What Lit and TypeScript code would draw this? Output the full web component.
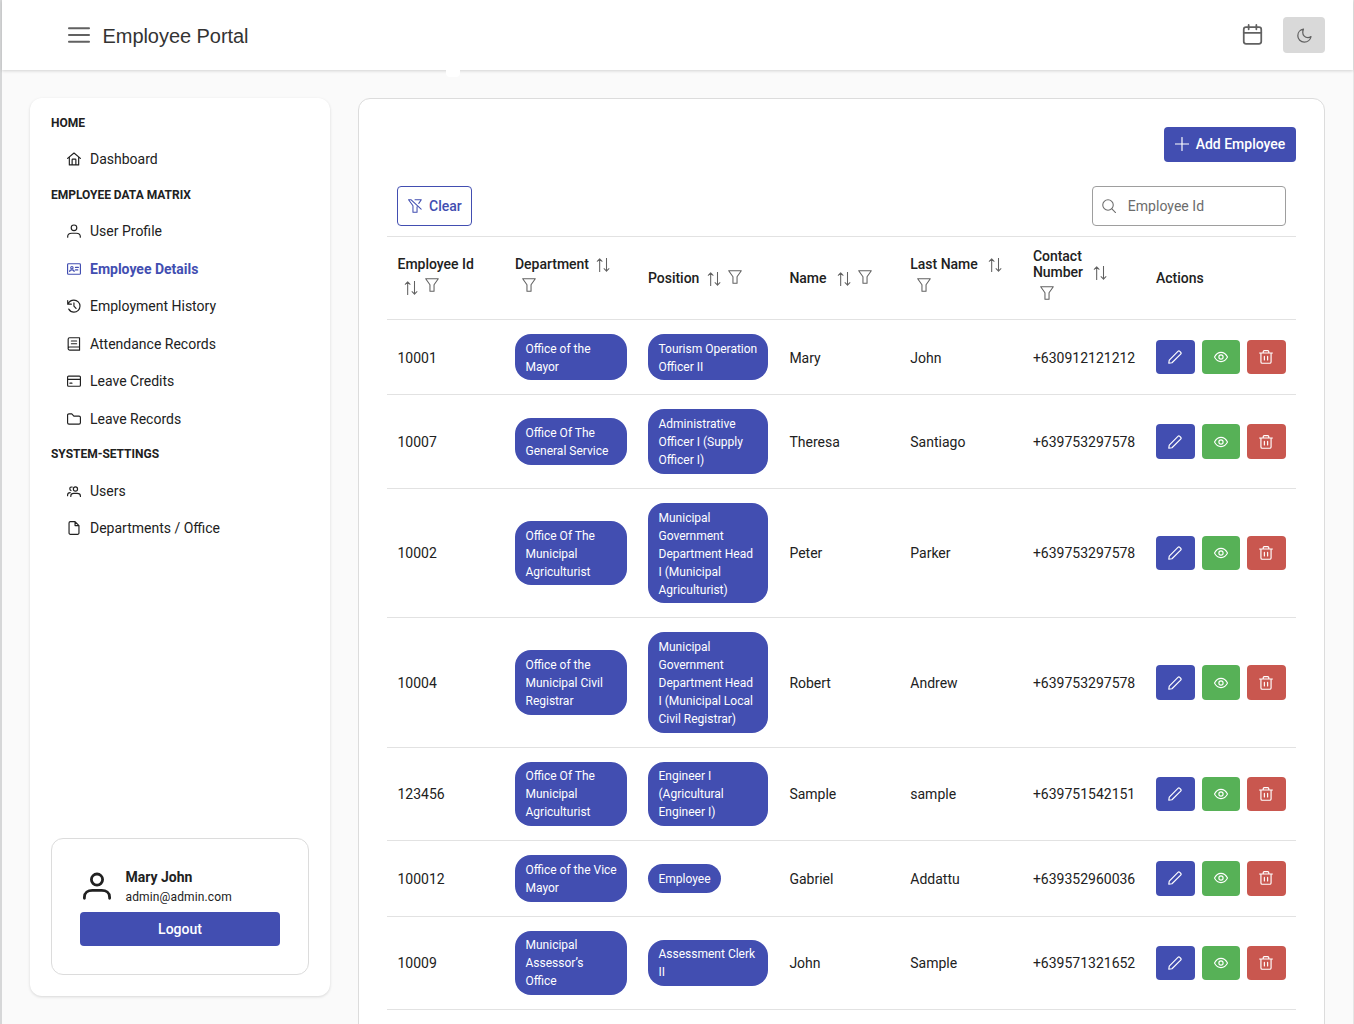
import { LitElement, html, css, svg } from "lit";
import { customElement, property } from "lit/decorators.js";
import { classMap } from "lit/directives/class-map.js";

const icons: Record<string, unknown> = {
  bars: svg`<path d="M1 4.6h22M1 12h22M1 19.4h22"/>`,
  calendar: svg`<rect x="2" y="3.6" width="20" height="19" rx="2.6"/><path d="M2 10h20M7.6 1v5M16.4 1v5"/>`,
  moon: svg`<path d="M10.3 1.8C5.2 2.6 1.3 6.9 1.3 12.2c0 5.7 4.7 10.4 10.4 10.4 5.2 0 9.7-3.8 10.7-8.9-1.4 1.1-3.2 1.7-5 1.7-4.6 0-8.2-3.7-8.2-8.2 0-2 .4-3.9 1.1-5.4z"/>`,
  home: svg`<path d="M1 11 12 1.8 23 11M4 8.7V22.2h16V8.700M8.800 22V13.300c0-.6.4-1 1-1h4.400c.6 0 1 .4 1 1V22"/>`,
  user: svg`<circle cx="12" cy="6.500" r="4.800"/><path d="M1.200 22.600v-1C1.200 17.800 4.200 15.800 8 15.800h8c3.800 0 6.800 2 6.800 5.800v1"/>`,
  idcard: svg`<rect x="1" y="3" width="22" height="18" rx="1.500"/><circle cx="8.400" cy="9.700" r="2"/><path d="M4.600 16.300c0-2 1.400-2.700 3.800-2.700s3.800.7 3.800 2.700M14.500 9.300h5M14.500 13.500h4"/>`,
  history: svg`<path d="M1.200 2.500v6.300h6.300M1.800 8.500C3.400 4.500 7.300 1.800 11.900 1.800c5.800 0 10.400 4.600 10.400 10.300S17.700 22.400 11.900 22.400c-3.800 0-7.100-2-8.900-5.100M11.900 6.700v5.600l3.600 3.900"/>`,
  book: svg`<path d="M21.500 17.200H4.600a2.700 2.700 0 0 0 0 5.400h16.900M21.500 1.300v21.300M2 20V3.800c0-1.400 1-2.500 2.400-2.500h17.100M7.500 6.800h9M7.500 11.500h9"/>`,
  card: svg`<rect x="1" y="3.500" width="22" height="17.500" rx="1.800"/><path d="M1 9.300h22M5 15.700h3.500" />`,
  folder: svg`<path d="M1 18.500v-13A2.300 2.300 0 0 1 3.300 3.200h4.900l3.600 4h8.800A2.400 2.400 0 0 1 23 9.600v8.900a2.400 2.400 0 0 1-2.400 2.400H3.400A2.400 2.400 0 0 1 1 18.500z"/>`,
  users: svg`<circle cx="14.500" cy="8.500" r="3.600"/><path d="M6.500 21.300v-.8c0-3 2.200-4.400 5-4.400h6c2.800 0 5.500 1.400 5.500 4.400v.8M8.800 5.300C6.500 4.700 4.800 6.100 4.800 8.100c0 1.500.8 2.600 2 3.200M1 20v-1.200c0-2.500 1.600-4 4.500-4"/>`,
  file: svg`<path d="M13.800 1.200H5.800A2.300 2.300 0 0 0 3.500 3.500v17a2.300 2.300 0 0 0 2.300 2.300h12.400a2.300 2.300 0 0 0 2.300-2.300V7.900zM13.800 1.200v6.700h6.700"/>`,
  plus: svg`<path d="M12 .8v22.400M.8 12h22.400"/>`,
  search: svg`<circle cx="10.300" cy="10.300" r="9"/><path d="m17 17 6.200 6.200"/>`,
  sort: svg`<path d="M6.300 23.500V1.500M2.200 5.600 6.300 1.500l4.100 4.100M18 .5v22M13.900 18.400 18 22.500l4.100-4.100"/>`,
  filter: svg`<path d="M1.200 1.200h21.600L15.500 11.500v11.300h-7V11.500z"/>`,
  filterSlash: svg`<path d="M12 1.200h10.800l-4.300 6.300M1 1.200h4L22.500 17.500M1 1.200 8.500 11.500v11.300h7v-9.500"/>`,
  pencil: svg`<path d="M1.300 22.700l.9-5.400L17 2.300c.9-.9 2.300-.9 3.200 0l1.500 1.500c.9.9.9 2.300 0 3.200L6.800 21.800z"/>`,
  eye: svg`<path d="M.8 12C3.500 6.800 7.400 4 12 4s8.500 2.800 11.200 8c-2.700 5.200-6.600 8-11.200 8S3.500 17.200.8 12z"/><circle cx="12" cy="12" r="3.600"/>`,
  trash: svg`<path d="M1 5.200h22M3.300 5.200v15.300c0 1.300.9 2.200 2.200 2.200h13c1.300 0 2.200-.9 2.200-2.200V5.200M7.200 5V3c0-1 .8-1.800 1.800-1.800h6c1 0 1.800.8 1.800 1.800v2M9.200 11v6M14.800 11v6"/>`,
};

@customElement("ep-icon")
class EpIcon extends LitElement {
  @property() name = "";
  static styles = css`
    :host { display: block; flex: none; width: 14px; height: 14px; }
    .glyph {
      display: block; width: 100%; height: 100%; fill: none; stroke: currentColor;
      stroke-width: var(--icon-stroke, 2); stroke-linecap: round; stroke-linejoin: round;
    }
  `;
  render() {
    return html`<svg class="glyph" viewBox="0 0 24 24" aria-hidden="true">${icons[this.name]}</svg>`;
  }
}

const menu = [
  { title: "HOME", items: [["home", "Dashboard"]] },
  {
    title: "EMPLOYEE DATA MATRIX",
    items: [
      ["user", "User Profile"],
      ["idcard", "Employee Details"],
      ["history", "Employment History"],
      ["book", "Attendance Records"],
      ["card", "Leave Credits"],
      ["folder", "Leave Records"],
    ],
  },
  { title: "SYSTEM-SETTINGS", items: [["users", "Users"], ["file", "Departments / Office"]] },
];

const employees = [
  ["10001", "Office of the Mayor", "Tourism Operation Officer II", "Mary", "John", "+630912121212"],
  ["10007", "Office Of The General Service", "Administrative Officer I (Supply Officer I)", "Theresa", "Santiago", "+639753297578"],
  ["10002", "Office Of The Municipal Agriculturist", "Municipal Government Department Head I (Municipal Agriculturist)", "Peter", "Parker", "+639753297578"],
  ["10004", "Office of the Municipal Civil Registrar", "Municipal Government Department Head I (Municipal Local Civil Registrar)", "Robert", "Andrew", "+639753297578"],
  ["123456", "Office Of The Municipal Agriculturist", "Engineer I (Agricultural Engineer I)", "Sample", "sample", "+639751542151"],
  ["100012", "Office of the Vice Mayor", "Employee", "Gabriel", "Addattu", "+639352960036"],
  ["10009", "Municipal Assessor’s Office", "Assessment Clerk II", "John", "Sample", "+639571321652"],
];

@customElement("app-root")
class AppRoot extends LitElement {
  static styles = css`
    :host {
      display: block; height: 1024px; overflow: hidden; background: #fafafa; color: #212121;
      font: 400 14px/18px Roboto, "Liberation Sans", sans-serif;
      --primary: #424eb1;
    }
    * { box-sizing: border-box; }
    .page {
      height: 1024px; display: flex; flex-direction: column;
      border-left: 2px solid #d6d7d8; border-right: 1px solid #e6e6e6;
    }
    .topbar {
      position: relative; flex: none; height: 70px; display: flex; align-items: center;
      padding: 0 28px 0 66px; background: #fff; box-shadow: 0 1px 3px rgba(0, 0, 0, 0.16);
    }
    .notch { position: absolute; left: 444px; top: 68px; width: 14px; height: 9px; background: #fff; border-radius: 0 0 4px 4px; }
    .menu-icon { width: 22px; height: 22px; color: #616161; --icon-stroke: 2; }
    .brand { margin: 1px 0 0 12.5px; font: 400 20px/24px "Liberation Sans", Arial, sans-serif; letter-spacing: -0.05px; color: #333; }
    .spacer { flex: 1; }
    .cal { width: 21px; height: 21px; color: #616161; margin-right: 20.5px; margin-top: -1px; }
    .theme {
      width: 42px; height: 36px; border: 0; border-radius: 4px; background: #d9d9d9; color: #616161;
      display: flex; align-items: center; justify-content: center; padding: 0;
    }
    .theme ep-icon { width: 15px; height: 15px; margin-top: 1px; }
    .body { flex: 1; min-height: 0; display: flex; gap: 28px; padding: 28px 28px 0; align-items: flex-start; }
    .sidebar {
      flex: none; width: 300px; height: 898px; padding: 17px 21px 21.5px; border-radius: 12px; background: #fff;
      display: flex; flex-direction: column; box-shadow: 0 1px 3px rgba(0, 0, 0, 0.14);
    }
    .group-title { height: 17px; font: 700 12px/17px Roboto, sans-serif; letter-spacing: -0.02px; white-space: nowrap; }
    .group { margin-bottom: 8.5px; }
    .items { padding: 8.6px 0 0.4px; margin-left: 16px; }
    .item { height: 37.5px; display: flex; align-items: center; gap: 9px; white-space: nowrap; }
    .active { color: var(--primary); font-weight: 700; }
    .account { margin-top: auto; height: 136.5px; border: 1px solid #dcdcdc; border-radius: 12px; padding: 28px; }
    .who { display: flex; gap: 14px; padding-left: 3px; height: 44.5px; align-items: flex-start; }
    .who ep-icon { width: 28px; height: 28px; margin-top: 4.5px; --icon-stroke: 2.4; }
    .who-text { display: flex; flex-direction: column; padding: 1px 0 0 0.5px; }
    .name { font-weight: 700; line-height: 19px; }
    .mail { font-size: 12px; line-height: 20px; letter-spacing: 0.14px; }
    .btn {
      border: 0; border-radius: 4px; background: var(--primary); color: #fff; display: flex; align-items: center;
      justify-content: center; font: 500 14px/18px Roboto, sans-serif; padding: 0;
    }
    .logout { width: 200px; height: 34.5px; padding-top: 0.5px; }
    .panel {
      flex: 1; min-width: 0; height: 980px; border: 1px solid #dcdcdc; border-radius: 12px;
      background: #fff; padding: 28px 28px 0; display: flex; flex-direction: column;
    }
    .panel-top { display: flex; justify-content: flex-end; }
    .add { width: 132px; height: 34.5px; gap: 7px; }
    .tools { display: flex; justify-content: space-between; margin-top: 24.5px; padding: 0 10.5px 0 10.4px; }
    .clear {
      width: 75px; height: 39.5px; background: #fff; color: var(--primary); border: 1px solid var(--primary); gap: 7px;
      --icon-stroke: 1.8;
    }
    .search {
      width: 194px; height: 39.5px; border: 1px solid #9e9e9e; border-radius: 4px; padding: 0 9.5px;
      display: flex; align-items: center; gap: 11.8px; color: #6c6c6c; letter-spacing: 0.03px;
    }
    .search ep-icon { --icon-stroke: 1.8; }
    .table { margin-top: 10.5px; border-top: 1px solid #e2e2e2; }
    .row {
      display: grid; grid-template-columns: 117.5px 133px 141.4px 120.9px 122.6px 123.2px 1fr;
      align-items: center; border-bottom: 1px solid #e2e2e2;
    }
    .cell { padding: 14px 10.5px; min-width: 0; white-space: nowrap; }
    .head { height: 83px; font: 500 14px/16px Roboto, sans-serif; letter-spacing: -0.02px; }
    .head .cell { padding-top: 0; padding-bottom: 0; }
    .head ep-icon { color: #616161; --icon-stroke: 1.8; }
    .line { display: flex; }
    .s1 { margin: 2px 0 0 7.4px; }
    .f1 { margin-left: 7px; }
    .head .two { display: flex; flex-direction: column; gap: 5.4px; padding-bottom: 8px; }
    .two .below { padding-left: 7px; }
    .head .id { padding-bottom: 5px; gap: 6px; }
    .id .s1 { margin: 3px 0 0 -0.3px; }
    .wide .s1 { margin-left: 10px; }
    .contact .line { align-items: flex-end; }
    .contact .s1 { margin: 0 0 0 10px; }
    .one .f1 { margin-top: -0.5px; }
    .tag {
      display: block; width: fit-content; background: var(--primary); color: #fff; border-radius: 16px;
      padding: 5.72px 9.5px 4.72px 10.5px; font-size: 12px; line-height: 18px; white-space: normal;
    }
    .tag.short { padding-right: 10.5px; }
    .data .text { padding-top: 14.8px; }
    .data .actions { display: flex; gap: 7px; padding-top: 0; padding-bottom: 0; }
    .act { width: 38.5px; height: 34.5px; }
    .view { background: #57b157; }
    .del { background: #c9574f; }
  `;

  private headCell(title: string, kind: string) {
    const sort = html`<ep-icon class="s1" name="sort"></ep-icon>`;
    const filter = html`<ep-icon class="f1" name="filter"></ep-icon>`;
    if (kind === "id")
      return html`<div class="cell two id"><div class="line">${title}</div><div class="line below">${sort}${filter}</div></div>`;
    if (kind.startsWith("one"))
      return html`<div class=${"cell line " + kind}><span>${title}</span>${sort}${filter}</div>`;
    const label = kind === "contact" ? title.split(" ").map((w) => html`<div>${w}</div>`) : title;
    return html`<div class=${"cell two " + kind}>
      <div class="line"><div>${label}</div>${sort}</div>
      <div class="line below"><ep-icon name="filter"></ep-icon></div>
    </div>`;
  }

  render() {
    return html`<div class="page">
      <header class="topbar">
        <ep-icon class="menu-icon" name="bars"></ep-icon>
        <span class="brand">Employee Portal</span>
        <span class="spacer"></span>
        <ep-icon class="cal" name="calendar"></ep-icon>
        <button class="theme"><ep-icon name="moon"></ep-icon></button>
        <span class="notch"></span>
      </header>
      <div class="body">
        <nav class="sidebar">
          ${menu.map(
            (g) => html`<section class="group">
              <div class="group-title">${g.title}</div>
              <div class="items">
                ${g.items.map(
                  ([icon, label]) => html`<div class=${classMap({ item: true, active: label === "Employee Details" })}>
                    <ep-icon name=${icon}></ep-icon><span>${label}</span>
                  </div>`
                )}
              </div>
            </section>`
          )}
          <section class="account">
            <div class="who">
              <ep-icon name="user"></ep-icon>
              <div class="who-text"><span class="name">Mary John</span><span class="mail">admin@admin.com</span></div>
            </div>
            <button class="btn logout">Logout</button>
          </section>
        </nav>
        <main class="panel">
          <div class="panel-top"><button class="btn add"><ep-icon name="plus"></ep-icon>Add Employee</button></div>
          <div class="tools">
            <button class="btn clear"><ep-icon name="filterSlash"></ep-icon>Clear</button>
            <div class="search"><ep-icon name="search"></ep-icon><span>Employee Id</span></div>
          </div>
          <div class="table">
            <div class="row head">
              ${this.headCell("Employee Id", "id")} ${this.headCell("Department", "dept")}
              ${this.headCell("Position", "one")} ${this.headCell("Name", "one wide")}
              ${this.headCell("Last Name", "wide")} ${this.headCell("Contact Number", "contact")}
              <div class="cell">Actions</div>
            </div>
            ${employees.map(
              ([id, dept, pos, first, last, phone]) => html`<div class="row data">
                <div class="cell text">${id}</div>
                <div class="cell"><span class="tag">${dept}</span></div>
                <div class="cell"><span class=${classMap({ tag: true, short: !pos.includes(" ") })}>${pos}</span></div>
                <div class="cell text">${first}</div>
                <div class="cell text">${last}</div>
                <div class="cell text">${phone}</div>
                <div class="cell actions">
                  <button class="btn act"><ep-icon name="pencil"></ep-icon></button>
                  <button class="btn act view"><ep-icon name="eye"></ep-icon></button>
                  <button class="btn act del"><ep-icon name="trash"></ep-icon></button>
                </div>
              </div>`
            )}
          </div>
        </main>
      </div>
    </div>`;
  }
}
